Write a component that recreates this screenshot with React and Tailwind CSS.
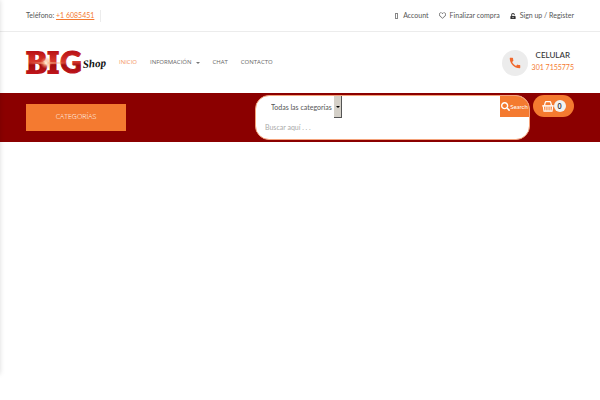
import React from 'react';
import { FaRegHeart, FaSearch, FaUnlockAlt } from 'react-icons/fa';
import { MdCall } from 'react-icons/md';

const menu = [
  { label: 'INICIO', active: true },
  { label: 'INFORMACIÓN', children: true },
  { label: 'CHAT' },
  { label: 'CONTACTO' },
];

function Logo() {
  return (
    <a href="#" aria-label="Big Shop" className="block shrink-0">
      <svg width="80" height="28" viewBox="0 0 80 28" className="block overflow-visible">
        <defs>
          <linearGradient id="bigRed" gradientUnits="userSpaceOnUse" x1="0" y1="2" x2="0" y2="26">
            <stop offset="0" stopColor="#b80f14" />
            <stop offset="0.45" stopColor="#d8392c" />
            <stop offset="0.6" stopColor="#a30c10" />
            <stop offset="1" stopColor="#c4161c" />
          </linearGradient>
          <radialGradient id="flare">
            <stop offset="0" stopColor="#fff8e6" />
            <stop offset="0.35" stopColor="#ffc49a" stopOpacity="0.75" />
            <stop offset="1" stopColor="#f08060" stopOpacity="0" />
          </radialGradient>
        </defs>
        <g
          fill="url(#bigRed)"
          stroke="url(#bigRed)"
          strokeWidth="2"
          className="font-['DejaVu_Serif_Condensed','DejaVu_Serif',serif] text-[28px] font-bold"
        >
          <text x="0" y="24">BI</text>
          <text x="34" y="24" strokeWidth="1" className="font-['Lato',sans-serif] text-[30px] font-black">G</text>
        </g>
        <ellipse cx="22" cy="14" rx="24" ry="1" fill="url(#flare)" />
        <circle cx="20" cy="14" r="6" fill="url(#flare)" />
        <text
          x="57"
          y="19"
          fill="#111"
          transform="rotate(-4 57 19)"
          className="font-['Liberation_Serif',serif] text-[11px] font-bold italic"
        >
          Shop
        </text>
      </svg>
    </a>
  );
}

function BasketIcon() {
  return (
    <svg width="12" height="11" viewBox="0 0 12 11" fill="none" stroke="currentColor">
      <path d="M2.5 4.5 3.2 1.6Q3.4 .7 4.3 .7H7.7Q8.6 .7 8.8 1.6L9.5 4.5" strokeWidth="1.2" />
      <path d="M.3 4.9H11.7" strokeWidth="1.5" />
      <path d="M1.4 5.4 2 10.2H10L10.6 5.4" strokeWidth="1.2" />
      <path d="M3.9 5.5V10M6 5.5V10M8.1 5.5V10" strokeWidth="1" />
    </svg>
  );
}

function TopBar() {
  return (
    <div className="flex h-8 items-center justify-between border-b border-[#ececec] px-[26px] text-[7px] text-[#555]">
      <p className="flex h-3 items-center border-r border-[#ececec] pr-1.5">
        <span>
          Teléfono: <a href="#" className="text-[#f47a30] underline">+1 6085451</a>
        </span>
      </p>
      <div className="flex items-center gap-[10px]">
        <a href="#" className="flex items-center gap-1">
          <span className="mr-px h-[6px] w-[3px] border border-[#888]" />
          Account
        </a>
        <a href="#" className="flex items-center gap-1">
          <FaRegHeart size={7} />
          Finalizar compra
        </a>
        <a href="#" className="flex items-center gap-1">
          <FaUnlockAlt size={6} className="text-[#333]" />
          Sign up / Register
        </a>
      </div>
    </div>
  );
}

function MainHeader() {
  return (
    <div className="flex h-[61px] items-center px-[26px]">
      <Logo />
      <nav className="ml-[13px] flex items-center gap-[13px] font-['Open_Sans',sans-serif] text-[6px] text-[#666]">
        {menu.map((item) => (
          <a key={item.label} href="#" className={item.active ? 'text-[#f4935a]' : 'flex items-center gap-1'}>
            {item.label}
            {item.children && (
              <span className="border-x-2 border-t-2 border-x-transparent border-t-[#777]" />
            )}
          </a>
        ))}
      </nav>
      <div className="ml-auto flex items-center gap-1">
        <span className="flex size-[26px] items-center justify-center rounded-full bg-[#ececec] text-[#f0682c]">
          <MdCall size={14} />
        </span>
        <div className="pb-1 text-center leading-3">
          <p className="text-[8px] font-medium text-[#333]">CELULAR</p>
          <a href="#" className="block text-[7px] text-[#f47a30]">301 7155775</a>
        </div>
      </div>
    </div>
  );
}

function SearchForm() {
  return (
    <form
      className="ml-auto flex h-[45px] w-[275px] items-start justify-between overflow-hidden rounded-[14px] border border-[#f4a27a] bg-white"
      onSubmit={(e) => e.preventDefault()}
    >
      <div>
        <div className="relative h-[22px] w-[86px]">
          <select
            aria-label="Categoría"
            className="block h-full w-full appearance-none bg-transparent pl-[15px] text-[7px] text-[#555]"
          >
            <option>Todas las categorías</option>
          </select>
          <span className="pointer-events-none absolute right-0 top-0 flex h-full w-2 items-center justify-center border-b border-r border-[#555] bg-[#d4d0c8]">
            <span className="border-x-2 border-t-2 border-x-transparent border-t-black" />
          </span>
        </div>
        <input
          type="text"
          aria-label="Buscar"
          placeholder="Buscar aquí . . ."
          className="block h-[18px] w-[200px] pl-[9px] text-[7px] outline-none placeholder:text-[#aaa]"
        />
      </div>
      <button type="submit" className="flex h-[21px] w-[29px] items-center justify-center bg-[#f47a30] text-[6px] text-white">
        <FaSearch size={9} className="shrink-0" />
        Search
      </button>
    </form>
  );
}

function ActionBar() {
  return (
    <div className="flex h-[49px] items-start bg-[#8b0000] px-[26px] pt-[2px]">
      <button
        type="button"
        className="mt-[9px] h-[27px] w-[100px] bg-[#f47a30] font-['Open_Sans',sans-serif] text-[7px] font-light text-white"
      >
        CATEGORÍAS
      </button>
      <SearchForm />
      <button
        type="button"
        aria-label="Carrito"
        className="ml-[3px] flex h-[22px] w-[41px] items-center justify-center rounded-full bg-[#f47a30] text-white"
      >
        <BasketIcon />
        <span className="flex size-3 items-center justify-center rounded-full bg-[#f2f2f2] text-[7px] font-bold text-[#333]">
          0
        </span>
      </button>
    </div>
  );
}

function App() {
  return (
    <div className="min-h-screen bg-white font-['Lato',sans-serif]">
      {/* closed side menu, only its shadow shows */}
      <aside className="fixed -left-10 top-0 h-[374px] w-10 shadow-[0_0_5px_rgba(0,0,0,0.15)]" />
      <header>
        <TopBar />
        <MainHeader />
        <ActionBar />
      </header>
      <main />
    </div>
  );
}

export default App;
